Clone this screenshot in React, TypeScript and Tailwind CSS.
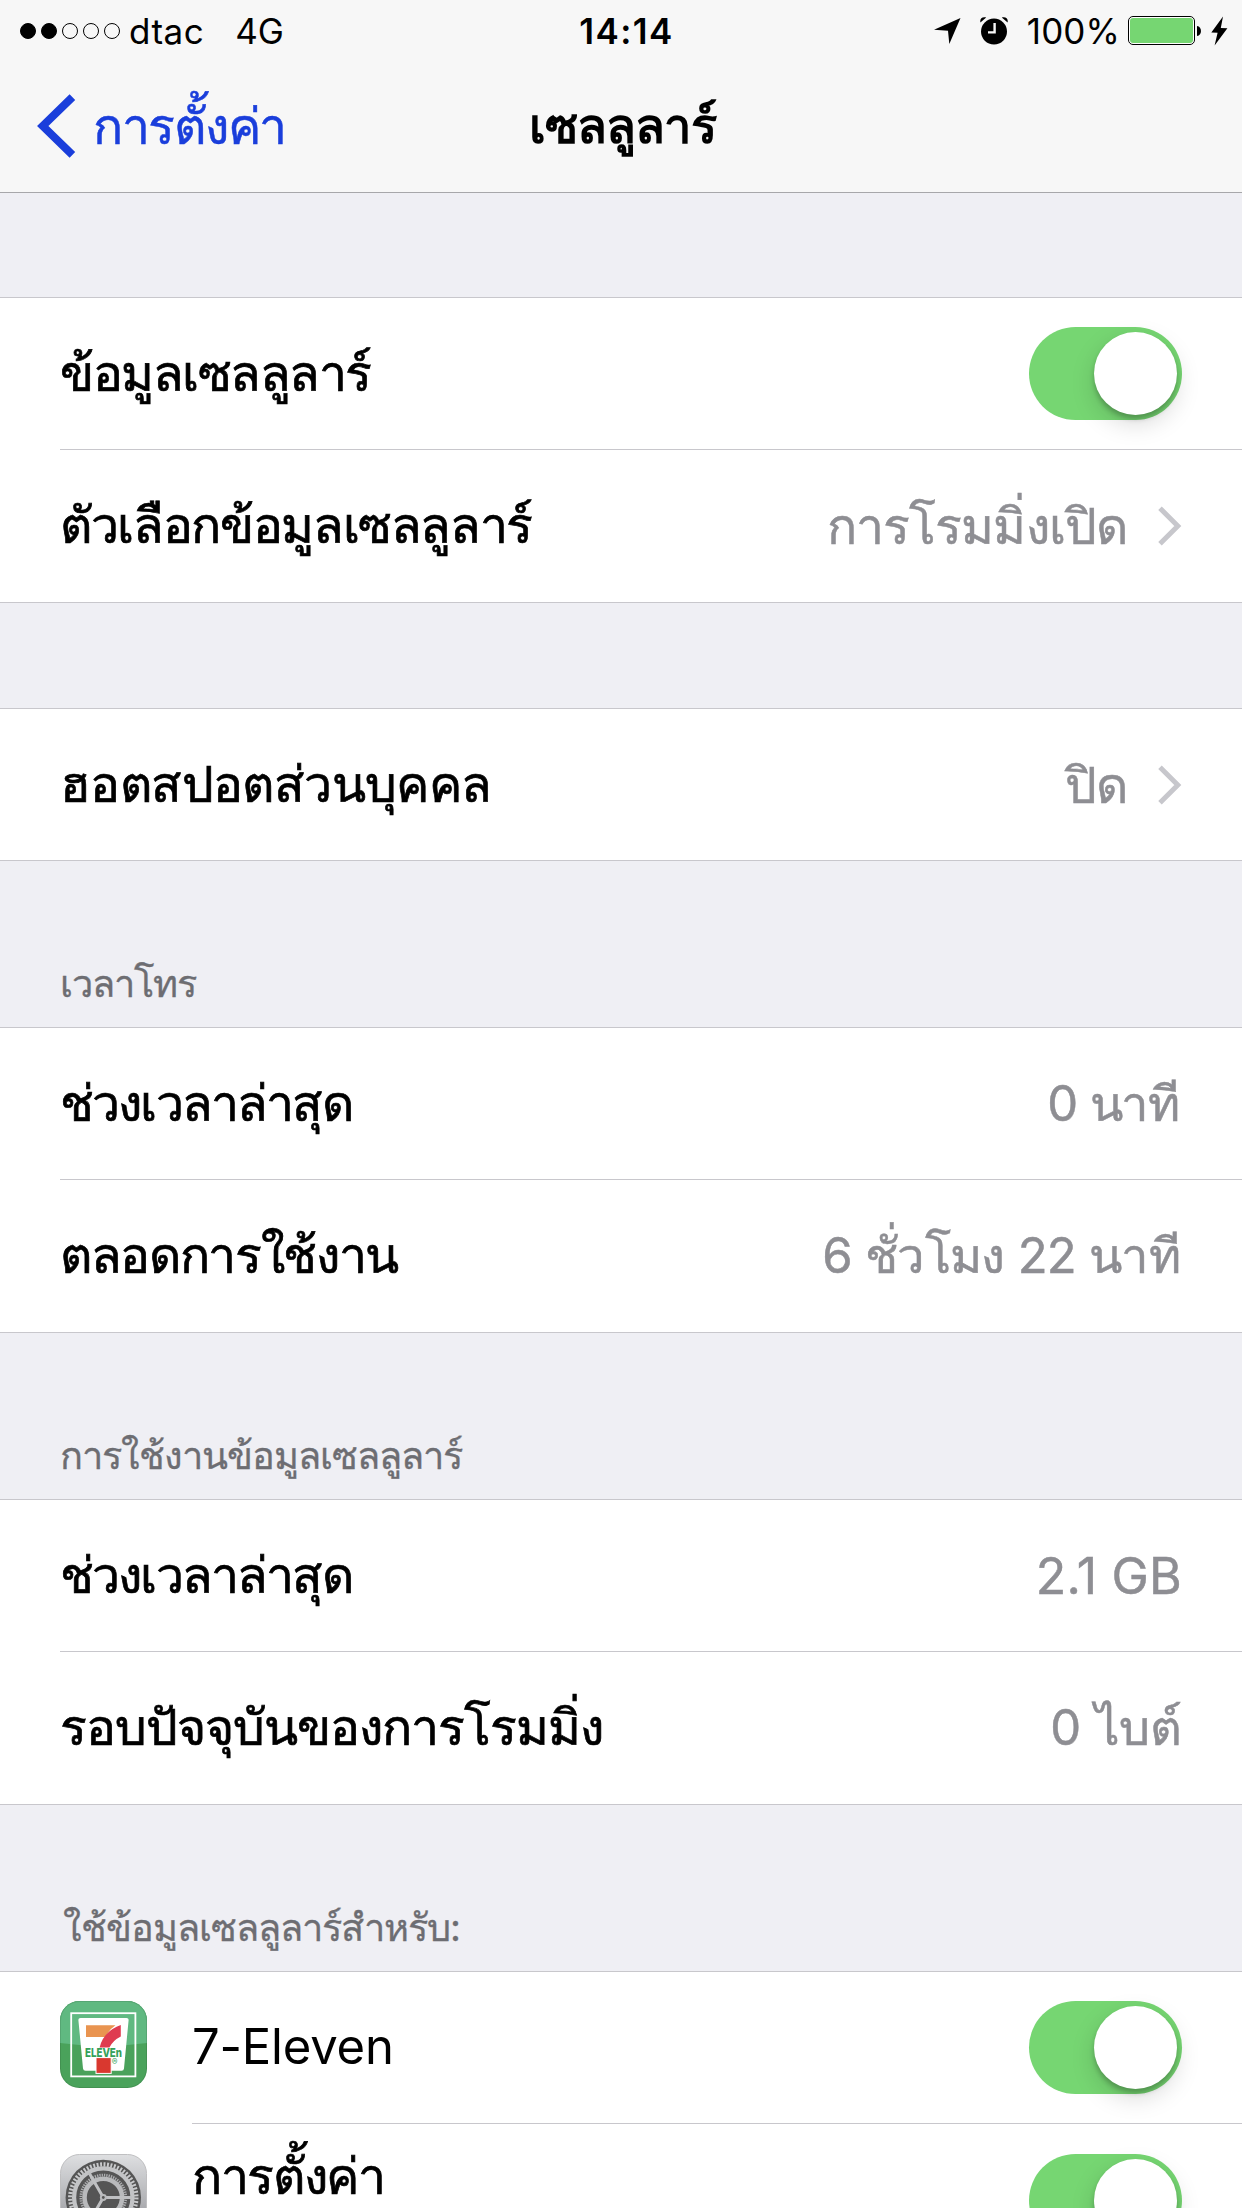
import type { ReactNode } from "react";

interface RowProps {
  label: string;
  value?: string;
  chevron?: boolean;
  on?: boolean;
  icon?: ReactNode;
  last?: boolean;
  className?: string;
  labelClassName?: string;
  valueClassName?: string;
}

interface SectionProps {
  title?: string;
  headClassName?: string;
  titleClassName?: string;
  children: ReactNode;
}

const SIGNAL_DOTS = [true, true, false, false, false];

function LocationArrow() {
  return (
    <svg className="h-[26px] w-[27px]" viewBox="0 0 27 26">
      <path d="M26.5 0 L15.3 26 L14 12.8 L0 11.8 Z" fill="#000" />
    </svg>
  );
}

function AlarmClock() {
  return (
    <svg className="h-[28px] w-[28px]" viewBox="0 0 28 28">
      <circle cx="14" cy="14.6" r="13" fill="#000" />
      <path d="M0.4 5.4 C-0.4 1.4 2.4 -0.4 6.2 0.6 Z M27.6 5.4 C28.4 1.4 25.6 -0.4 21.8 0.6 Z" fill="#000" />
      <path d="M14.6 6 V15.4 H8" stroke="#f7f7f7" strokeWidth="2.4" fill="none" />
    </svg>
  );
}

function Battery() {
  return (
    <svg className="h-[30px] w-[74px]" viewBox="0 0 74 30">
      <rect x="0.5" y="0.5" width="66" height="28" rx="4.5" fill="#fff" stroke="#000" />
      <rect x="2" y="2" width="63" height="25" rx="3" fill="#76d672" />
      <path d="M69 10 C74.3 10.5 74.3 19.5 69 20 Z" fill="#000" />
    </svg>
  );
}

function Bolt() {
  return (
    <svg className="h-[30px] w-[17px]" viewBox="0 0 17 30">
      <path d="M12 0.5 L0.3 16.5 L6.6 16.8 L3.6 29.5 L16.4 12.2 L9.8 12 Z" fill="#000" />
    </svg>
  );
}

function StatusBar() {
  return (
    <div className="grid h-[62px] grid-cols-[1fr_auto_1fr] items-center text-[35px] leading-[60px] text-black">
      <div className="flex items-center pl-[20px]">
        <div className="flex gap-[5px]">
          {SIGNAL_DOTS.map((filled, i) => (
            <span
              key={i}
              className={`size-[16px] rounded-full border border-black ${filled ? "bg-black" : ""}`}
            />
          ))}
        </div>
        <span className="ml-[9px] tracking-[0.5px]">dtac</span>
        <span className="ml-[31px]">4G</span>
      </div>
      <span className="ml-[11px] font-semibold tracking-[1.4px]">14:14</span>
      <div className="flex items-center justify-end pr-[14px]">
        <LocationArrow />
        <div className="ml-[19px]">
          <AlarmClock />
        </div>
        <span className="mr-[8px] ml-[19px] tracking-[0.1px]">100%</span>
        <Battery />
        <div className="ml-[9px]">
          <Bolt />
        </div>
      </div>
    </div>
  );
}

function NavBar() {
  return (
    <div className="grid h-[128px] grid-cols-[1fr_auto_1fr] items-center">
      <div className="flex items-center pl-[36px] text-[#1a3edb]">
        <svg className="h-[66px] w-[40px]" viewBox="0 0 40 66" fill="none">
          <path d="M36.4 4.2 L6.8 33 L36.4 61.8" stroke="currentColor" strokeWidth="8" />
        </svg>
        <span className="ml-[17px] text-[50px] leading-[60px] tracking-[-1.3px] [-webkit-text-stroke:0.5px_#1a3edb]">
          การตั้งค่า
        </span>
      </div>
      <h1 className="ml-[3px] text-[49px] leading-[60px] font-bold tracking-[-1px] text-black">เซลลูลาร์</h1>
    </div>
  );
}

function Toggle() {
  return (
    <div className="flex h-[93px] w-[153px] shrink-0 items-center justify-end rounded-full bg-[#76d672] pr-[5px]">
      <div className="size-[83px] rounded-full bg-white shadow-[0_9px_24px_rgba(0,0,0,0.15),0_4px_5px_rgba(0,0,0,0.22)]" />
    </div>
  );
}

function Chevron() {
  return (
    <svg className="ml-[30px] h-[40px] w-[25px] shrink-0" viewBox="0 0 25 40" fill="none">
      <path d="M3 2.2 L20.8 20 L3 37.8" stroke="#c7c7cc" strokeWidth="5" />
    </svg>
  );
}

function SevenElevenIcon() {
  return (
    <svg className="size-[87px]" viewBox="0 0 87 87">
      <defs>
        <clipPath id="seven-tile">
          <rect width="87" height="87" rx="19.5" />
        </clipPath>
      </defs>
      <g clipPath="url(#seven-tile)">
        <rect width="87" height="87" fill="#4aa25b" />
        <path d="M0 0 H87 V42 Q43.5 48 0 42 Z" fill="#60b981" />
        <rect x="11.2" y="12.2" width="64.2" height="63.2" fill="none" stroke="#fff" strokeWidth="1.8" />
        <path d="M20.5 17 H66.5 Q68.8 17 68.6 19.2 L64 67.5 Q63.8 69.8 61.5 69.8 H25.5 Q23.3 69.8 23 67.5 L18.4 19.2 Q18.2 17 20.5 17 Z" fill="#fff" />
        <path d="M26 24.3 H55.5 Q49 28.5 45.4 36 H26 Z" fill="#e99450" />
        <path d="M60.8 24 V35.4 Q52.5 39.5 49.4 46.6 H39.6 Q43.2 30.5 60.8 24 Z" fill="#df3b50" />
        <rect x="36" y="56.6" width="15.2" height="15.8" fill="#d9382f" stroke="#fff" strokeWidth="1" />
        <text
          x="25"
          y="56"
          textLength="37"
          lengthAdjust="spacingAndGlyphs"
          fontSize="12"
          className="font-['Inter',sans-serif] font-extrabold"
          fill="#35a158"
        >
          ELEVEn
        </text>
        <text x="51.8" y="64.3" fontSize="8.5" className="font-['Inter',sans-serif]" fill="#35a158">
          ®
        </text>
      </g>
      <rect x="0.5" y="0.5" width="86" height="86" rx="19" fill="none" stroke="#000" strokeOpacity="0.1" />
    </svg>
  );
}

function SettingsGearIcon() {
  return (
    <svg className="size-[87px]" viewBox="0 0 87 87">
      <defs>
        <linearGradient id="gear-tile" x1="0" y1="0" x2="0" y2="1">
          <stop offset="0" stopColor="#dedfe1" />
          <stop offset="1" stopColor="#8b8c91" />
        </linearGradient>
      </defs>
      <rect x="0.5" y="0.5" width="86" height="86" rx="19" fill="url(#gear-tile)" stroke="#bfbfc1" />
      <g fill="none">
        <circle cx="43.3" cy="43.5" r="37.7" fill="#555555" />
        <circle cx="43.3" cy="43.5" r="33" stroke="#c9cacc" strokeWidth="4.4" strokeDasharray="1.9 1.556" />
        <circle cx="43.3" cy="43.5" r="29.2" stroke="#c3c4c6" strokeWidth="4.2" />
        <circle cx="43.3" cy="43.5" r="22.4" stroke="#aeafb1" strokeWidth="2.8" strokeDasharray="1.3 1.046" />
        <circle cx="43.3" cy="43.5" r="18.8" stroke="#b9babc" strokeWidth="4.6" />
        <path
          d="M43.3 43.5 H72 M43.3 43.5 L29 18.7 M43.3 43.5 L29 68.3"
          stroke="#bfc0c2"
          strokeWidth="3"
        />
        <circle cx="43.3" cy="43.5" r="3.4" fill="#b9babc" />
        <circle cx="43.3" cy="43.5" r="1.4" fill="#555555" />
      </g>
    </svg>
  );
}

function Row({
  label,
  value,
  chevron,
  on,
  icon,
  last,
  className = "h-[152px]",
  labelClassName = "",
  valueClassName = "",
}: RowProps) {
  return (
    <div className={`flex bg-white pl-[60px] ${last ? "border-b border-[#c8c7cc]" : ""} ${className}`}>
      {icon && (
        <div className={`flex w-[132px] shrink-0 items-start ${last ? "pt-[30px]" : "pt-[29px]"}`}>{icon}</div>
      )}
      <div
        className={`flex flex-1 items-center justify-between pr-[60px] ${last ? "" : "border-b border-[#c8c7cc]"}`}
      >
        <span
          className={`pb-[2px] leading-[60px] whitespace-nowrap text-black ${labelClassName}`}
        >
          {label}
        </span>
        <div className="flex items-center">
          {value && (
            <span
              className={`leading-[60px] whitespace-nowrap text-[#8e8e93] [-webkit-text-stroke:0.5px_#8e8e93] ${valueClassName}`}
            >
              {value}
            </span>
          )}
          {chevron && <Chevron />}
          {on && <Toggle />}
        </div>
      </div>
    </div>
  );
}

function Section({ title, headClassName = "h-[166px]", titleClassName = "", children }: SectionProps) {
  return (
    <section>
      <div className={`flex items-end px-[60px] pb-[20px] ${headClassName}`}>
        {title && (
          <h2
            className={`text-[38px] leading-[48px] tracking-[-1px] whitespace-nowrap text-[#6d6d72] [-webkit-text-stroke:0.3px_#6d6d72] ${titleClassName}`}
          >
            {title}
          </h2>
        )}
      </div>
      <div className="border-t border-[#c8c7cc]">{children}</div>
    </section>
  );
}

export default function App() {
  return (
    <div className="h-[2208px] w-[1242px] overflow-hidden bg-[#efeff4] font-['Inter',sans-serif]">
      <header className="h-[193px] border-b border-[#a7a7aa] bg-[#f7f7f7]">
        <StatusBar />
        <NavBar />
      </header>

      <Section headClassName="h-[104px]">
        <Row
          label="ข้อมูลเซลลูลาร์"
          labelClassName="text-[50px] tracking-[-1.5px] [-webkit-text-stroke:0.7px_#000]"
          on
        />
        <Row
          className="h-[153px]"
          label="ตัวเลือกข้อมูลเซลลูลาร์"
          labelClassName="text-[50px] tracking-[-1.35px] [-webkit-text-stroke:0.7px_#000]"
          value="การโรมมิ่งเปิด"
          valueClassName="text-[50px] tracking-[-0.9px]"
          chevron
          last
        />
      </Section>

      <Section headClassName="h-[105px]">
        <Row
          label="ฮอตสปอตส่วนบุคคล"
          labelClassName="text-[50px] tracking-[-0.6px] [-webkit-text-stroke:0.7px_#000]"
          value="ปิด"
          valueClassName="text-[50px] tracking-[-0.9px]"
          chevron
          last
        />
      </Section>

      <Section title="เวลาโทร">
        <Row
          label="ช่วงเวลาล่าสุด"
          labelClassName="text-[50px] tracking-[-1.85px] [-webkit-text-stroke:0.7px_#000]"
          value="0 นาที"
          valueClassName="mr-[3px] text-[49px] tracking-[-1.2px]"
        />
        <Row
          className="h-[153px]"
          label="ตลอดการใช้งาน"
          labelClassName="text-[50px] tracking-[-1.35px] [-webkit-text-stroke:0.7px_#000]"
          value="6 ชั่วโมง 22 นาที"
          valueClassName="mr-[2px] text-[49px] tracking-[-0.7px]"
          last
        />
      </Section>

      <Section title="การใช้งานข้อมูลเซลลูลาร์">
        <Row
          label="ช่วงเวลาล่าสุด"
          labelClassName="text-[50px] tracking-[-1.85px] [-webkit-text-stroke:0.7px_#000]"
          value="2.1 GB"
          valueClassName="text-[50px] tracking-[0.2px]"
        />
        <Row
          className="h-[153px]"
          label="รอบปัจจุบันของการโรมมิ่ง"
          labelClassName="text-[50px] tracking-[-1px] [-webkit-text-stroke:0.7px_#000]"
          value="0 ไบต์"
          valueClassName="text-[49px] tracking-[-0.2px]"
          last
        />
      </Section>

      <Section title="ใช้ข้อมูลเซลลูลาร์สำหรับ:" titleClassName="ml-[3px]">
        <Row
          label="7-Eleven"
          labelClassName="text-[49px] tracking-[-0.2px]"
          icon={<SevenElevenIcon />}
          on
        />
        {/* label sits above the row centre, its subtitle is below the fold */}
        <Row
          className="h-[153px]"
          label="การตั้งค่า"
          labelClassName="mb-[46px] text-[50px] tracking-[-1.35px] [-webkit-text-stroke:0.7px_#000]"
          icon={<SettingsGearIcon />}
          on
          last
        />
      </Section>
    </div>
  );
}
